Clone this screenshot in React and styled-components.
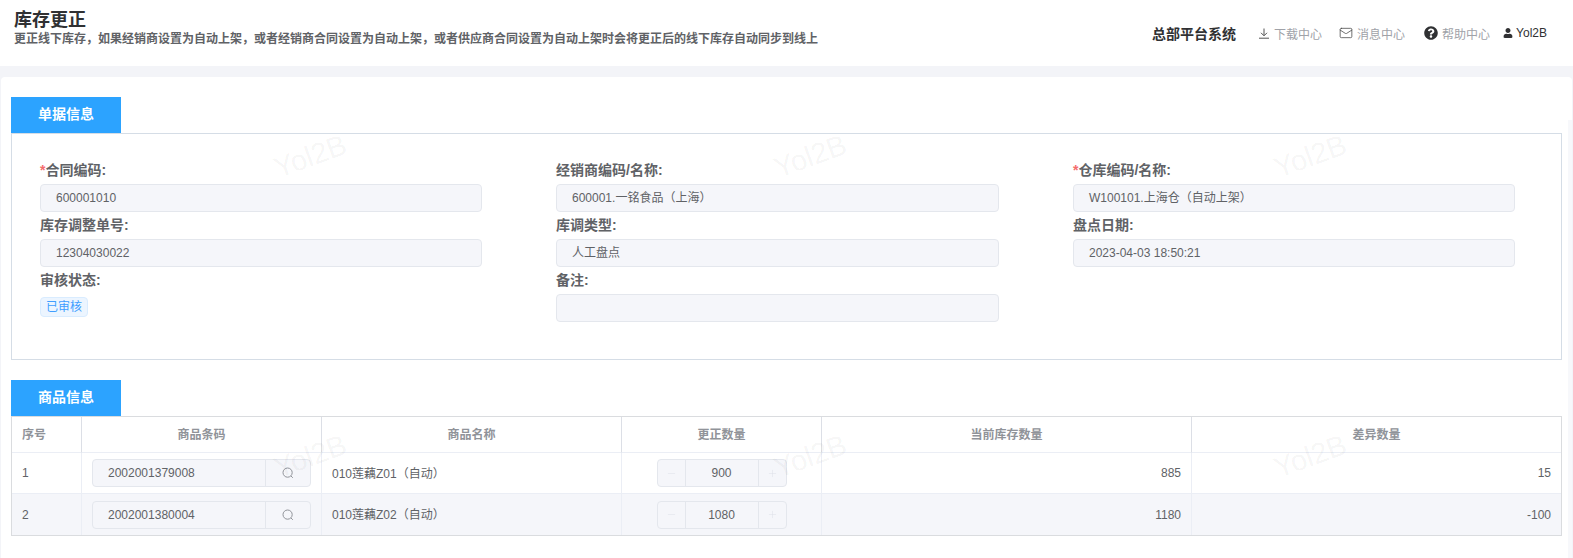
import React from "react";
import styled, { createGlobalStyle } from "styled-components";
import { Mail, Minus, Plus } from "lucide-react";
import { FaQuestionCircle, FaUser } from "react-icons/fa";

const GlobalStyle = createGlobalStyle`
  html, body {
    margin: 0;
    height: 100%;
    overflow: hidden;
    background: #f3f4f8;
    font-family: "Liberation Sans", "Noto Sans CJK SC", sans-serif;
  }
`;

const documentFields = [
  { label: "合同编码:", value: "600001010", required: true },
  { label: "经销商编码/名称:", value: "600001.一铭食品（上海）" },
  { label: "仓库编码/名称:", value: "W100101.上海仓（自动上架）", required: true },
  { label: "库存调整单号:", value: "12304030022" },
  { label: "库调类型:", value: "人工盘点" },
  { label: "盘点日期:", value: "2023-04-03 18:50:21" },
  { label: "审核状态:", tag: "已审核" },
  { label: "备注:", value: "" },
];

const rows = [
  { no: 1, barcode: "2002001379008", name: "010莲藕Z01（自动）", qty: 900, stock: 885, diff: 15 },
  { no: 2, barcode: "2002001380004", name: "010莲藕Z02（自动）", qty: 1080, stock: 1180, diff: -100 },
];

const columnWidths = [70, 240, 300, 200, 370, 369];

function DownloadIcon() {
  return (
    <svg width="12" height="11" viewBox="0 0 12 11" fill="none" stroke="#555" strokeWidth="1">
      <path d="M6 0.5V7.5M3 4.8L6 7.8L9 4.8M1 10.2H11" />
    </svg>
  );
}

function SearchIcon() {
  return (
    <svg width="12" height="12" viewBox="0 0 12 12" fill="none" stroke="#909399" strokeWidth="1">
      <circle cx="5.6" cy="5.6" r="4.6" />
      <path d="M9 9L10.8 10.8" />
    </svg>
  );
}

function App() {
  return (
    <Page>
      <GlobalStyle />
      <Header>
        <div>
          <Title>库存更正</Title>
          <Subtitle>
            更正线下库存，如果经销商设置为自动上架，或者经销商合同设置为自动上架，或者供应商合同设置为自动上架时会将更正后的线下库存自动同步到线上
          </Subtitle>
        </div>
        <Nav>
          <Brand>总部平台系统</Brand>
          <NavItem $left={22}>
            <DownloadIcon />
            下载中心
          </NavItem>
          <NavItem $left={17}>
            <Mail size={14} strokeWidth={1.3} color="#444" />
            消息中心
          </NavItem>
          <NavItem $left={19}>
            <FaQuestionCircle size={14} color="#303133" />
            帮助中心
          </NavItem>
          <UserItem $left={13}>
            <FaUser size={10} color="#303133" />
            Yol2B
          </UserItem>
        </Nav>
      </Header>

      <Card>
        <Watermarks>
          {Array.from({ length: 6 }).map((_, i) => (
            <Mark key={i}>Yol2B</Mark>
          ))}
        </Watermarks>
        <ScrollTrack />

        <Tab>单据信息</Tab>
        <InfoBox>
          {documentFields.map((field) => (
            <div key={field.label}>
              <Label>
                {field.required && <Star>*</Star>}
                {field.label}
              </Label>
              {field.tag ? <Tag>{field.tag}</Tag> : <ReadOnly>{field.value}</ReadOnly>}
            </div>
          ))}
        </InfoBox>

        <Tab $spaced>商品信息</Tab>
        <TableWrap>
          <Table>
            <colgroup>
              {columnWidths.map((w, i) => (
                <col key={i} width={w} />
              ))}
            </colgroup>
            <thead>
              <tr>
                <Th $left>序号</Th>
                <Th>商品条码</Th>
                <Th>商品名称</Th>
                <Th>更正数量</Th>
                <Th>当前库存数量</Th>
                <Th>差异数量</Th>
              </tr>
            </thead>
            <tbody>
              {rows.map((row, i) => (
                <Tr key={row.no} $striped={i % 2 === 1}>
                  <Td>{row.no}</Td>
                  <Td>
                    <SearchInput>
                      <SearchValue>{row.barcode}</SearchValue>
                      <SearchAddon>
                        <SearchIcon />
                      </SearchAddon>
                    </SearchInput>
                  </Td>
                  <NameTd>{row.name}</NameTd>
                  <Td>
                    <Stepper>
                      <StepButton $side="left">
                        <Minus size={11} strokeWidth={1} />
                      </StepButton>
                      <StepValue>{row.qty}</StepValue>
                      <StepButton $side="right">
                        <Plus size={11} strokeWidth={1} />
                      </StepButton>
                    </Stepper>
                  </Td>
                  <Td $right>{row.stock}</Td>
                  <Td $right>{row.diff}</Td>
                </Tr>
              ))}
            </tbody>
          </Table>
        </TableWrap>
      </Card>
    </Page>
  );
}

const Page = styled.div`
  height: 558px;
  display: flex;
  flex-direction: column;
`;

const Header = styled.header`
  height: 66px;
  box-sizing: border-box;
  padding: 9px 26px 0 14px;
  background: #fff;
  display: flex;
  justify-content: space-between;
  align-items: flex-start;
`;

const Title = styled.div`
  font-size: 18px;
  line-height: 22px;
  font-weight: 700;
  color: #303133;
`;

const Subtitle = styled.div`
  font-size: 12px;
  line-height: 16px;
  font-weight: 700;
  color: #606266;
`;

const Nav = styled.nav`
  display: flex;
  align-items: center;
  height: 48px;
`;

const Brand = styled.div`
  font-size: 14px;
  font-weight: 700;
  color: #303133;
`;

const NavItem = styled.div`
  display: flex;
  align-items: center;
  gap: 4px;
  margin-left: ${(p) => p.$left}px;
  font-size: 12px;
  color: #a0a2a8;
`;

const UserItem = styled(NavItem)`
  gap: 3px;
  color: #303133;
`;

const Card = styled.main`
  position: relative;
  flex: 1;
  margin: 11px 1px 0;
  padding: 20px 10px 0;
  background: #fff;
  border-radius: 4px 4px 0 0;
  overflow: hidden;
`;

const Watermarks = styled.div`
  position: absolute;
  top: -71px;
  left: 59px;
  display: grid;
  grid-template-columns: repeat(3, 500px);
  grid-auto-rows: 300px;
  place-items: center;
  pointer-events: none;
`;

const Mark = styled.span`
  font-size: 29px;
  color: rgba(0, 0, 0, 0.05);
  transform: rotate(-20deg);
`;

const ScrollTrack = styled.div`
  position: absolute;
  top: 43px;
  right: 0;
  bottom: 0;
  width: 4px;
  background: #f7f8fb;
`;

const Tab = styled.div`
  width: 110px;
  height: 36px;
  margin-top: ${(p) => (p.$spaced ? "20px" : "0")};
  background: #2ca3ff;
  color: #fff;
  font-size: 14px;
  font-weight: 700;
  line-height: 34px;
  text-align: center;
`;

const InfoBox = styled.section`
  box-sizing: border-box;
  height: 227px;
  padding: 23px 0 0 28px;
  border: 1px solid #d5dde6;
  display: grid;
  grid-template-columns: 442px 443px 442px;
  grid-auto-rows: 55px;
  column-gap: 74px;
`;

const Label = styled.div`
  height: 27px;
  line-height: 27px;
  font-size: 14px;
  font-weight: 700;
  color: #606266;
`;

const Star = styled.span`
  color: #f56c6c;
`;

const ReadOnly = styled.div`
  box-sizing: border-box;
  height: 28px;
  line-height: 26px;
  padding-left: 15px;
  background: #f5f6fa;
  border: 1px solid #e4e7ed;
  border-radius: 4px;
  font-size: 12px;
  color: #606266;
`;

const Tag = styled.span`
  display: inline-block;
  box-sizing: border-box;
  height: 20px;
  line-height: 18px;
  margin-top: 3px;
  padding: 0 5px;
  background: #ecf5ff;
  border: 1px solid #d9ecff;
  border-radius: 4px;
  font-size: 12px;
  color: #409eff;
`;

const TableWrap = styled.div`
  border: 1px solid #dadcdf;
`;

const Table = styled.table`
  width: 100%;
  table-layout: fixed;
  border-collapse: separate;
  border-spacing: 0;
  font-size: 12px;
  color: #606266;
`;

const Th = styled.th`
  box-sizing: border-box;
  height: 36px;
  padding: 0 10px 2px;
  border-right: 1px solid #dcdfe6;
  border-bottom: 1px solid #ebeef5;
  font-weight: 700;
  color: #909399;
  text-align: ${(p) => (p.$left ? "left" : "center")};
  &:last-child {
    border-right: none;
  }
`;

const Tr = styled.tr`
  background: ${(p) => (p.$striped ? "#f5f6fa" : "#fff")};
`;

const Td = styled.td`
  box-sizing: border-box;
  height: 41px;
  padding: 0 10px;
  border-right: 1px solid #ebeef5;
  border-bottom: 1px solid #ebeef5;
  text-align: ${(p) => (p.$right ? "right" : "left")};
  &:last-child {
    border-right: none;
  }
  tr:last-child > & {
    border-bottom: none;
  }
`;

const NameTd = styled(Td)`
  padding-bottom: 2px;
`;

const SearchInput = styled.div`
  box-sizing: border-box;
  height: 28px;
  display: flex;
  background: #f5f6fa;
  border: 1px solid #e4e7ed;
  border-radius: 4px;
`;

const SearchValue = styled.div`
  flex: 1;
  line-height: 26px;
  padding-left: 15px;
`;

const SearchAddon = styled.div`
  box-sizing: border-box;
  width: 45px;
  display: flex;
  align-items: center;
  justify-content: center;
  border-left: 1px solid #e4e7ed;
`;

const Stepper = styled.div`
  box-sizing: border-box;
  width: 130px;
  height: 28px;
  margin: 0 auto;
  display: flex;
  background: #f5f6fa;
  border: 1px solid #e4e7ed;
  border-radius: 4px;
`;

const StepButton = styled.div`
  box-sizing: border-box;
  width: 28px;
  display: flex;
  align-items: center;
  justify-content: center;
  color: #dcdfe6;
  border-${(p) => (p.$side === "left" ? "right" : "left")}: 1px solid #e4e7ed;
`;

const StepValue = styled.div`
  flex: 1;
  line-height: 26px;
  text-align: center;
`;

export default App;
